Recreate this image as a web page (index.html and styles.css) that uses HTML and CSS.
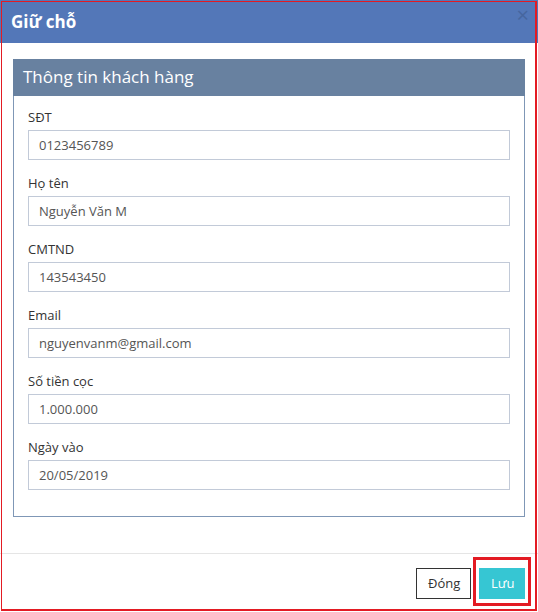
FILE: index.html
```html
<!DOCTYPE html>
<html lang="vi">
<head>
<meta charset="utf-8">
<link rel="stylesheet" href="styles.css">
</head>
<body>
<div class="modal">
  <div class="modal-header">
    <h4 class="modal-title">Giữ chỗ</h4>
    <span class="close">×</span>
  </div>
  <div class="modal-body">
    <div class="panel">
      <div class="panel-heading">Thông tin khách hàng</div>
      <div class="panel-body">
        <div class="field"><label>SĐT</label><div class="input">0123456789</div></div>
        <div class="field"><label>Họ tên</label><div class="input">Nguyễn Văn M</div></div>
        <div class="field"><label>CMTND</label><div class="input">143543450</div></div>
        <div class="field"><label>Email</label><div class="input">nguyenvanm@gmail.com</div></div>
        <div class="field"><label>Số tiền cọc</label><div class="input">1.000.000</div></div>
        <div class="field"><label>Ngày vào</label><div class="input">20/05/2019</div></div>
      </div>
    </div>
  </div>
  <div class="modal-footer">
    <button class="btn btn-default">Đóng</button>
    <span class="highlight"><button class="btn btn-primary">Lưu</button></span>
  </div>
  <div class="frame"></div>
</div>
</body>
</html>
```

FILE: styles.css
```css
* { box-sizing: border-box; }
html, body { margin: 0; padding: 0; background: #fff; }
body { font-family: "Open Sans", "Noto Sans", sans-serif; color: #333; }
.modal { position: relative; width: 538px; height: 612px; background: #fff; display: flex; flex-direction: column; }
.modal-header { height: 43px; background: #5377b8; display: flex; align-items: center; justify-content: space-between; padding: 0 9px 0 11px; }
.modal-title { margin: 0; color: #fff; font-size: 17px; font-weight: 700; line-height: 20px; }
.close { color: #46669f; font-size: 22px; line-height: 1; align-self: flex-start; margin-top: 3px; }
.modal-body { padding: 16px 13px 36px 13px; }
.panel { border: 1px solid #7f97b6; }
.panel-heading { height: 37px; background: #6881a0; color: #fff; font-size: 17px; line-height: 36px; margin: -1px -1px 0 -1px; padding-left: 10px; }
.panel-body { padding: 12px 14px 26px 14px; display: flex; flex-direction: column; gap: 14px; }
.field { display: flex; flex-direction: column; }
.field label { font-size: 13px; line-height: 18px; color: #333; margin-bottom: 4px; }
.input { height: 30px; border: 1px solid #c2cad8; padding: 0 10px; font-size: 13px; line-height: 28px; color: #555; }
.modal-footer { border-top: 1px solid #e5e5e5; padding: 14px 13px 0 0; display: flex; justify-content: flex-end; gap: 8px; }
.btn { font-family: inherit; font-size: 13px; height: 31px; line-height: 29px; padding: 0 11px; border: 1px solid #333; background: #fff; color: #333; margin: 0; }
.btn-primary { background: #36c6d3; border-color: #36c6d3; color: #fff; width: 46px; }
.btn-default { width: 55px; }
.highlight { position: relative; display: inline-flex; }
.highlight::after { content: ""; position: absolute; left: -6px; top: -11px; right: -6px; bottom: -7px; border: 3px solid #e31b23; pointer-events: none; }
.frame { position: absolute; left: 1px; top: 1px; right: 1px; bottom: 1px; border: 1px solid #e31b23; border-right-width: 2px; border-bottom-width: 2px; pointer-events: none; }
```
